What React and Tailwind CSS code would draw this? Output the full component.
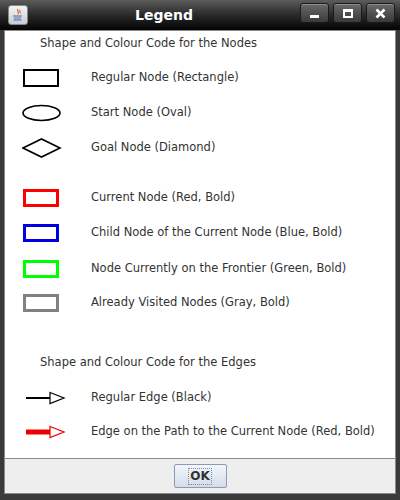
import React from "react";

const font = { fontFamily: '"DejaVu Sans", "Liberation Sans", sans-serif' };

function RectIcon({ color, w = 3 }) {
  return (
    <svg width="40" height="20" viewBox="0 0 40 20">
      <rect x={1 + w / 2} y={1 + w / 2} width={36 - w} height={18 - w} fill="none" stroke={color} strokeWidth={w} />
    </svg>
  );
}

function Row({ icon, label, className = "" }) {
  return (
    <div className={`flex items-center h-[20px] ${className}`}>
      <div className="w-[70px] pl-[17px] flex items-center">{icon}</div>
      <span className="pl-[16px] text-[11.5px] text-[#333]">{label}</span>
    </div>
  );
}

function TitleButton({ children }) {
  return (
    <div className="w-[29px] h-[20px] rounded-[3px] border border-[#1a1a1a] bg-gradient-to-b from-[#6a6a6a] to-[#3a3a3a] flex items-center justify-center shadow-[inset_0_1px_0_rgba(255,255,255,0.25)]">
      {children}
    </div>
  );
}

export default function App() {
  return (
    <div className="w-[400px] h-[500px] bg-[#3a3a3a] flex flex-col" style={font}>
      {/* title bar */}
      <div className="h-[30px] flex items-center bg-gradient-to-b from-[#5c5c5c] via-[#2a2a2a] to-[#050505]">
        <div className="ml-[8px] w-[20px] h-[20px] rounded-[3px] bg-gradient-to-b from-[#f4f4f4] to-[#c8ccd4] border border-[#888] flex items-center justify-center">
          <svg width="14" height="14" viewBox="0 0 14 14">
            <path d="M7 1c-2 2 2 3 0 5M9 2c-1 1 1 2 0 3" stroke="#e0602a" strokeWidth="1.2" fill="none" />
            <path d="M2 8h9M3 10h7M2.5 12h8" stroke="#4a6aa8" strokeWidth="1.2" />
          </svg>
        </div>
        <div className="flex-1 flex items-center justify-center">
          <span className="text-white font-bold text-[14px]">Legend</span>
        </div>
        <div className="mr-[5px] flex gap-[4px] mt-[-4px]">
          <TitleButton>
            <div className="w-[9px] h-[3px] bg-white mt-[6px]" />
          </TitleButton>
          <TitleButton>
            <div className="w-[10px] h-[9px] border-2 border-white border-t-[3px]" />
          </TitleButton>
          <TitleButton>
            <svg width="11" height="11" viewBox="0 0 11 11">
              <path d="M1.5 1.5l8 8M9.5 1.5l-8 8" stroke="white" strokeWidth="2.5" />
            </svg>
          </TitleButton>
        </div>
      </div>
      {/* body */}
      <div className="flex-1 flex flex-col px-[4px] pb-[6px]">
        <div className="flex-1 flex flex-col border border-[#8a8a8a] bg-[#eeeeee]">
          <div className="h-[428px] bg-white border-b border-[#8a8a8a] flex flex-col">
            <div className="pl-[35px] pt-[4px] h-[22px] text-[11.5px] text-[#333] flex items-center">
              Shape and Colour Code for the Nodes
            </div>
            <Row className="mt-[15px]" icon={<RectIcon color="#000" w={2} />} label="Regular Node (Rectangle)" />
            <Row
              className="mt-[15px]"
              icon={
                <svg width="40" height="18" viewBox="0 0 40 18">
                  <ellipse cx="19.5" cy="9" rx="18.5" ry="7.5" fill="none" stroke="#000" strokeWidth="1.6" />
                </svg>
              }
              label="Start Node (Oval)"
            />
            <Row
              className="mt-[15px]"
              icon={
                <svg width="40" height="20" viewBox="0 0 40 20">
                  <path d="M1 10L19.5 1L38 10L19.5 19Z" fill="none" stroke="#000" strokeWidth="1.6" />
                </svg>
              }
              label="Goal Node (Diamond)"
            />
            <Row className="mt-[30px]" icon={<RectIcon color="#ff0000" />} label="Current Node (Red, Bold)" />
            <Row className="mt-[15px]" icon={<RectIcon color="#0000e0" />} label="Child Node of the Current Node (Blue, Bold)" />
            <Row className="mt-[16px]" icon={<RectIcon color="#00ff00" />} label="Node Currently on the Frontier (Green, Bold)" />
            <Row className="mt-[14px]" icon={<RectIcon color="#808080" />} label="Already Visited Nodes (Gray, Bold)" />
            <div className="pl-[35px] mt-[40px] h-[20px] text-[11.5px] text-[#333] flex items-center">
              Shape and Colour Code for the Edges
            </div>
            <Row
              className="mt-[15px]"
              icon={
                <svg width="44" height="14" viewBox="0 0 44 14">
                  <path d="M4 7H28" stroke="#000" strokeWidth="2" />
                  <path d="M28 1.5L42 7L28 12.5Z" fill="white" stroke="#000" strokeWidth="1.2" />
                </svg>
              }
              label="Regular Edge (Black)"
            />
            <Row
              className="mt-[14px]"
              icon={
                <svg width="44" height="14" viewBox="0 0 44 14">
                  <path d="M4 7H28" stroke="#ee0000" strokeWidth="5" />
                  <path d="M28 1.5L42 7L28 12.5Z" fill="white" stroke="#ee0000" strokeWidth="1.2" />
                </svg>
              }
              label="Edge on the Path to the Current Node (Red, Bold)"
            />
          </div>
          <div className="flex-1 flex items-center justify-center">
            <button className="w-[53px] h-[24px] border border-[#8a9bb2] rounded-[2px] bg-gradient-to-b from-[#f4f7fb] to-[#d3dce8] flex items-center justify-center">
              <span className="px-[1px] border border-dotted border-[#7a8aa0] font-bold text-[12px] text-[#333] leading-[15px]">OK</span>
            </button>
          </div>
        </div>
      </div>
    </div>
  );
}
